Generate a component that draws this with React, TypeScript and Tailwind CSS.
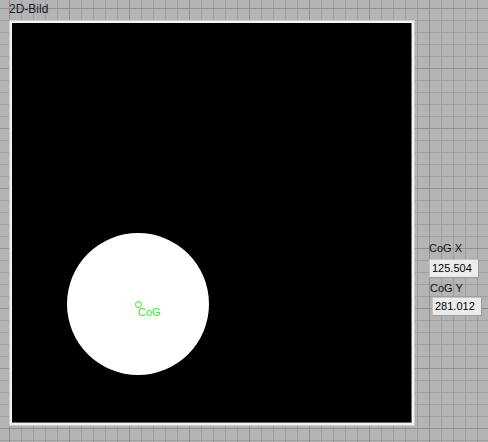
export default function App() {
  return (
    <div className="w-[488px] h-[442px] overflow-hidden bg-[#b4b4b4] bg-[linear-gradient(to_right,#8f8f8f_1px,transparent_1px),linear-gradient(to_bottom,#8f8f8f_1px,transparent_1px),linear-gradient(to_right,#9e9e9e_1px,transparent_1px),linear-gradient(to_bottom,#9e9e9e_1px,transparent_1px)] bg-[size:60px_60px,60px_60px,12px_12px,12px_12px] bg-[position:9px_8px] font-['Liberation_Sans',Arial,sans-serif] text-black">
      {/* title */}
      <div className="pt-[2px] pl-[9px] text-[12px] leading-[14px] text-[#1a1a2e]">2D-Bild</div>

      <div className="flex items-start mt-[4px]">
        {/* picture control */}
        <div className="ml-[9px] border border-[#cdcdcd] bg-[#f2f2f2] p-[2px]">
          <div className="relative w-[400px] h-[400px] bg-black shadow-[inset_-1px_-1px_0_#6e6e6e] overflow-hidden">
            <div className="absolute left-[55px] top-[210px] w-[142px] h-[142px] rounded-full bg-white" />
            <div className="absolute left-[123px] top-[278px] w-[7px] h-[7px] rounded-full border border-[#2fe82f]" />
            <div className="absolute left-[126px] top-[283px] text-[11px] leading-[13px] text-[#2fe82f]">CoG</div>
          </div>
        </div>

        {/* indicators */}
        <div className="flex flex-col items-start mt-[222px] text-[11px]">
          <div className="ml-[14px] leading-[13px] text-[#111]">CoG X</div>
          <div className="ml-[14px] mt-[4px] w-[50px] h-[19px] pl-[2px] leading-[17px] bg-[#ececec] border border-[#c4c4c4] border-r-[#9a9a9a] border-b-[#9a9a9a]">
            125.504
          </div>
          <div className="ml-[15px] mt-[4px] leading-[13px] text-[#111]">CoG Y</div>
          <div className="ml-[17px] mt-[2px] w-[50px] h-[19px] pl-[2px] leading-[17px] bg-[#ececec] border border-[#c4c4c4] border-r-[#9a9a9a] border-b-[#9a9a9a]">
            281.012
          </div>
        </div>
      </div>
    </div>
  )
}
